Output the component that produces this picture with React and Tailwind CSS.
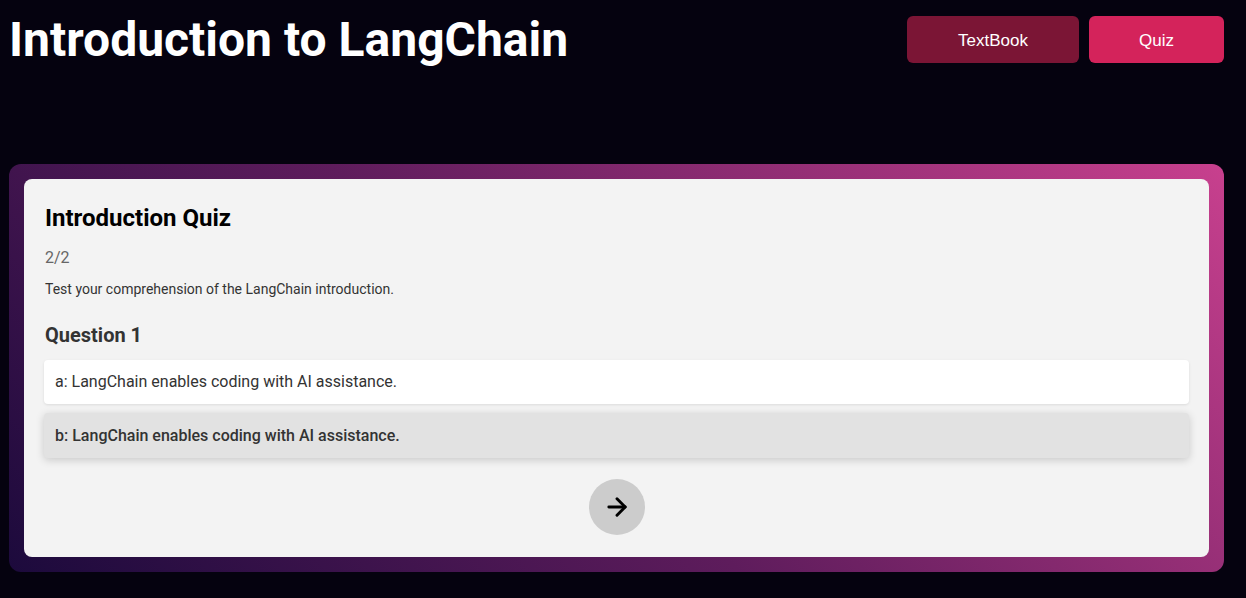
import { ArrowRight } from "lucide-react"

function QuizOption({ label, text, active }) {
    return (
        <div
            className={
                active
                    ? "h-[45px] flex items-center px-[11px] rounded bg-[#e2e2e2] shadow-[0_2px_8px_rgba(0,0,0,0.18)] text-[16px] font-medium text-[#333]"
                    : "h-[44px] flex items-center px-[11px] rounded bg-white shadow-[0_1px_3px_rgba(0,0,0,0.1)] text-[16px] text-[#333]"
            }
        >
            {label}: {text}
        </div>
    )
}

export default function App() {
    return (
        <div className="min-h-[598px] bg-[#05020f] pl-[9px] pr-[22px] pt-4 font-['Roboto',sans-serif]">
            <div className="flex items-start justify-between">
                <h1 className="text-[48px] leading-[48px] font-bold text-white">Introduction to LangChain</h1>
                <div className="flex gap-[10px] font-['Liberation_Sans',sans-serif] text-[17px] text-white">
                    <button className="w-[172px] h-[47px] pt-[2px] rounded-md bg-[#7b1535]">TextBook</button>
                    <button className="w-[135px] h-[47px] pt-[2px] rounded-md bg-[#d4235b]">Quiz</button>
                </div>
            </div>

            <div className="mt-[100px] rounded-xl p-[15px] bg-[linear-gradient(45deg,#1c0a3c_0%,#5e1c5c_45%,#c8408e_100%)]">
                <div className="rounded-lg bg-[#f3f3f3] px-5 pt-[23px] pb-[22px]">
                    <h2 className="pl-px text-[24px] leading-8 font-bold text-black">Introduction Quiz</h2>
                    <p className="mt-[12px] pl-px text-[16px] leading-6 text-[#666]">2/2</p>
                    <p className="mt-[9px] pl-px text-[14px] leading-5 text-[#333]">Test your comprehension of the LangChain introduction.</p>
                    <h3 className="mt-[22px] pl-px text-[20px] leading-7 font-bold text-[#333]">Question 1</h3>
                    <div className="mt-[11px] flex flex-col gap-[9px]">
                        <QuizOption label="a" text="LangChain enables coding with AI assistance." />
                        <QuizOption label="b" text="LangChain enables coding with AI assistance." active />
                    </div>
                    <div className="mt-[21px] flex justify-center">
                        <button className="w-[56px] h-[56px] rounded-full bg-[#cccccc] flex items-center justify-center">
                            <ArrowRight size={28} strokeWidth={2.5} color="#000" />
                        </button>
                    </div>
                </div>
            </div>
        </div>
    )
}
